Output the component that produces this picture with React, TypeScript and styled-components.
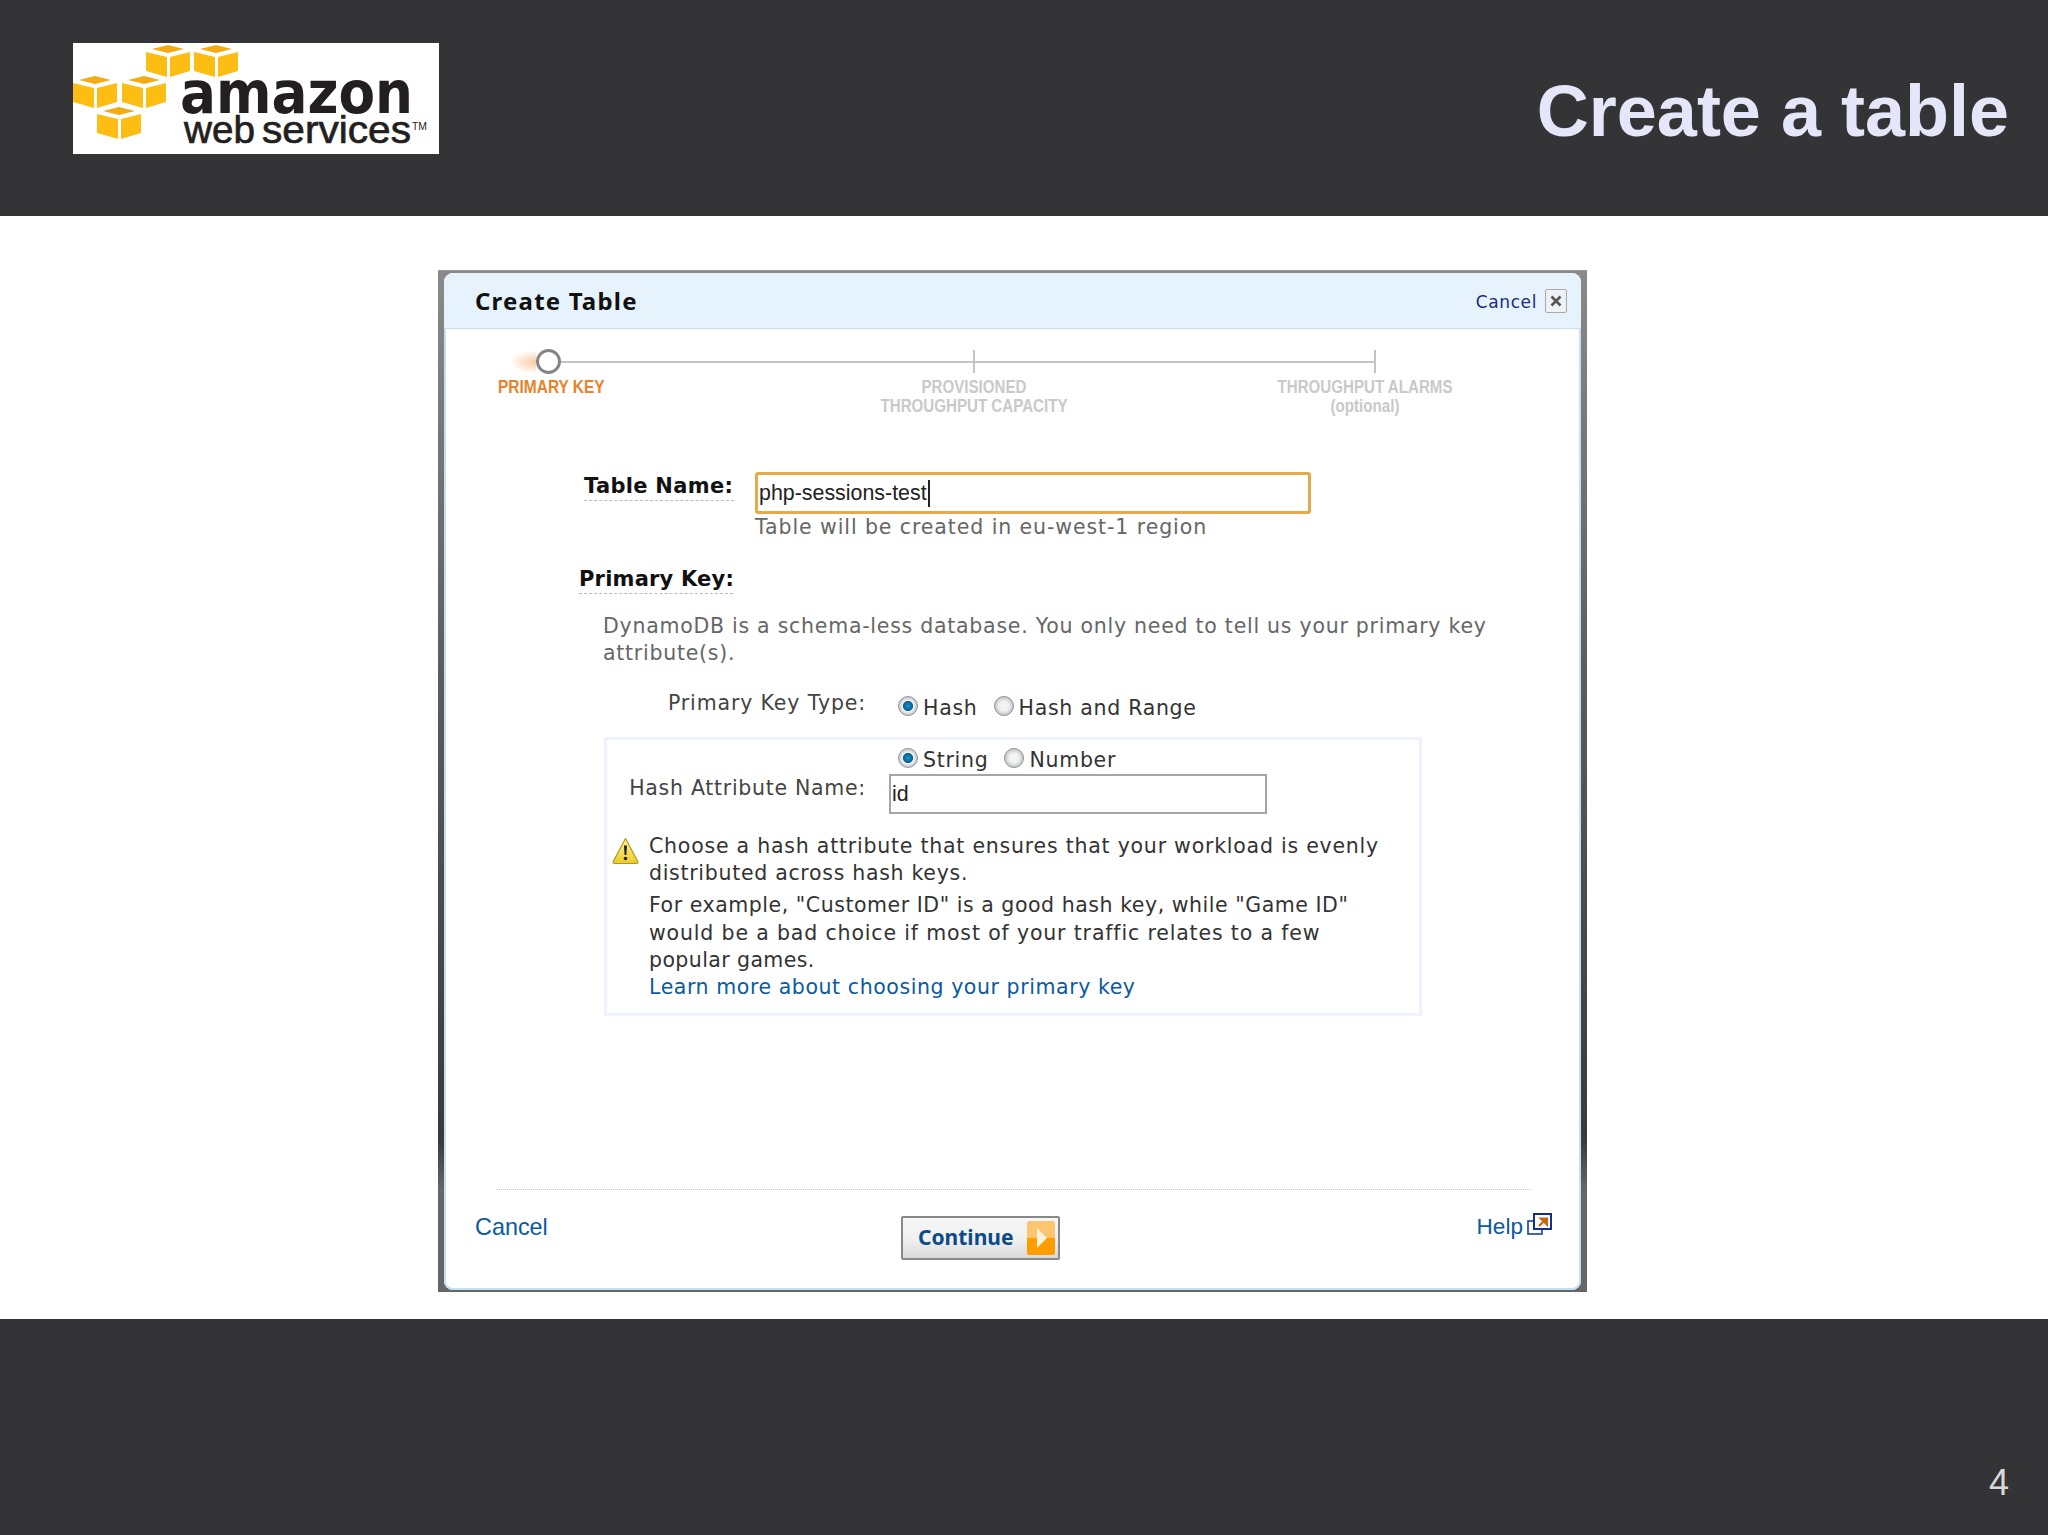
import React from 'react';
import styled, { createGlobalStyle } from 'styled-components';

const GlobalStyle = createGlobalStyle`
  html, body { margin: 0; padding: 0; background: #fff; }
  body { font-family: "DejaVu Sans", sans-serif; }
`;

const Slide = styled.div`
  width: 2048px;
  height: 1535px;
  display: flex;
  flex-direction: column;
  overflow: hidden;
`;

const TopBar = styled.header`
  height: 216px;
  background: #343336;
  display: flex;
  justify-content: space-between;
  padding: 43px 39px 0 73px;
  box-sizing: border-box;
`;

const SlideTitle = styled.h1`
  margin: 23px 0 0;
  font: bold 72px/90px "Liberation Sans", Arial, sans-serif;
  color: #e6e6fa;
`;

const Main = styled.main`
  flex: 1;
  padding: 54px 0 0 438px;
`;

const BottomBar = styled.footer`
  height: 216px;
  background: #343336;
  display: flex;
  justify-content: flex-end;
  padding: 139px 39px 0 0;
  box-sizing: border-box;
`;

const PageNumber = styled.span`
  font: 36px/50px "Liberation Sans", Arial, sans-serif;
  color: #d8d8d8;
`;

const Frame = styled.div`
  width: 1149px;
  height: 1022px;
  box-sizing: border-box;
  padding: 2px 6px;
  background: linear-gradient(#8a8a8a 0, #5c5c5c 40%, #3a3a3a 85%, #666 90%);
  border-top: 1px solid #999;
`;

const Panel = styled.section`
  height: 100%;
  background: #fff;
  border-radius: 9px;
  box-shadow: inset 2px 0 0 #c4e0f3, inset -2px 0 0 #c4e0f3, inset 0 -2px 0 #c4e0f3;
  overflow: hidden;
  display: flex;
  flex-direction: column;
`;

const PanelHeader = styled.div`
  height: 56px;
  flex: none;
  box-sizing: border-box;
  background: #e6f2fc;
  border-bottom: 1px solid #c5e0f5;
  padding: 0 14px 0 31px;
  display: flex;
  align-items: center;
  justify-content: space-between;
`;

const PanelTitle = styled.h2`
  margin: 0;
  font: bold 24px/30px "Noto Sans", sans-serif;
  letter-spacing: 1.2px;
  color: #111;
`;

const HeaderActions = styled.div`
  display: flex;
  align-items: center;
  gap: 8px;
`;

const HeaderCancel = styled.a`
  font-size: 17px;
  line-height: 24px;
  padding-top: 2px;
  letter-spacing: 0.6px;
  color: #1a2a80;
`;

const CloseBox = styled.span`
  width: 22px;
  height: 24px;
  box-sizing: border-box;
  border: 1px solid #aaa;
  border-radius: 2px;
  background: #eef1f5;
  display: flex;
  align-items: center;
  justify-content: center;
`;

const Track = styled.div`
  margin-top: 20px;
  padding-left: 67px;
  height: 25px;
  display: flex;
  align-items: center;
`;

const TrackTail = styled.span`
  width: 25px;
  height: 22px;
  background: radial-gradient(ellipse at 100% 50%, rgba(240, 150, 70, 0.5), rgba(240, 150, 70, 0) 75%);
`;

const TrackCircle = styled.span`
  width: 25px;
  height: 25px;
  box-sizing: border-box;
  border: 3px solid #858585;
  border-radius: 50%;
  background: #fff;
`;

const TrackLine = styled.div`
  position: relative;
  width: 815px;
  height: 2px;
  background: #c4c4c4;
`;

const TrackTick = styled.span<{ $left: number }>`
  position: absolute;
  left: ${p => p.$left}px;
  top: -11px;
  width: 2px;
  height: 23px;
  background: #c4c4c4;
`;

const StepLabels = styled.div`
  margin-top: 4px;
  padding-left: 54px;
  display: grid;
  grid-template-columns: 356px 240px 151px 240px;
`;

const StepLabel = styled.div<{ $active?: boolean }>`
  font: bold 18px/19px "Liberation Sans", sans-serif;
  color: ${p => (p.$active ? '#e8832a' : '#c9c9c9')};
  text-align: ${p => (p.$active ? 'left' : 'center')};
  white-space: nowrap;
  transform: scaleX(${p => (p.$active ? 0.86 : 0.84)});
  transform-origin: ${p => (p.$active ? 'left' : 'center')};
`;

const NameRow = styled.div`
  margin-top: 56px;
  padding-left: 140px;
  display: flex;
  align-items: flex-start;
`;

const FieldLabel = styled.label`
  display: block;
  font-weight: bold;
  font-size: 21px;
  line-height: 28px;
  letter-spacing: 0.3px;
  color: #111;
  border-bottom: 1px dashed #bbb;
  white-space: nowrap;
`;

const TableNameLabel = styled(FieldLabel)`
  width: 150px;
  margin-right: 21px;
`;

const PrimaryKeyLabel = styled(FieldLabel)`
  width: 154px;
  margin: 25px 0 0 135px;
  letter-spacing: 0.2px;
`;

const FocusedInput = styled.div`
  width: 556px;
  height: 42px;
  box-sizing: border-box;
  border: 3px solid #e4aa4c;
  border-radius: 3px;
  padding-left: 1px;
  display: flex;
  align-items: center;
  font: 21.4px/30px "Liberation Sans", sans-serif;
  color: #222;
`;

const Caret = styled.span`
  width: 2px;
  height: 27px;
  margin-left: 1px;
  background: #222;
`;

const Hint = styled.div`
  margin-left: 311px;
  font-size: 20.5px;
  line-height: 26px;
  letter-spacing: 0.91px;
  color: #666;
  white-space: nowrap;
`;

const Intro = styled.p`
  margin: 19px 0 0 159px;
  font-size: 20.5px;
  line-height: 27px;
  letter-spacing: 0.74px;
  color: #666;
  white-space: nowrap;
`;

const TypeRow = styled.div`
  margin: 23px 0 0 222px;
  height: 32px;
  display: flex;
`;

const RowLabel = styled.span<{ $width: number }>`
  width: ${p => p.$width}px;
  flex: none;
  text-align: right;
  font-size: 20.5px;
  line-height: 27px;
  letter-spacing: 0.86px;
  color: #444;
  white-space: nowrap;
`;

const AttributeLabel = styled(RowLabel)`
  margin-top: 1px;
  letter-spacing: 0.71px;
`;

const RadioGroup = styled.div<{ $left: number; $top: number; $gap: number }>`
  margin: ${p => p.$top}px 0 0 ${p => p.$left}px;
  display: flex;
  gap: ${p => p.$gap}px;
`;

const RadioOption = styled.span`
  display: flex;
  align-items: flex-start;
  gap: 5px;
  font-size: 20.5px;
  line-height: 27px;
  letter-spacing: 0.71px;
  color: #333;
  white-space: nowrap;
`;

const Radio = styled.span<{ $checked?: boolean }>`
  width: 20px;
  height: 20px;
  margin-top: 1px;
  box-sizing: border-box;
  border-radius: 50%;
  border: 1px solid #8f959b;
  background: ${p =>
    p.$checked
      ? 'radial-gradient(circle closest-side, #1496cc 0, #0a5e8c 52%, #f2f4f6 60%, #c4c8cc 100%)'
      : 'radial-gradient(circle closest-side, #f6f6f6 0, #f0f0f0 55%, #c4c6c8 100%)'};
`;

const AttributeBox = styled.div`
  margin: 15px 0 0 160px;
  width: 818px;
  height: 279px;
  box-sizing: border-box;
  border: 3px solid #eef3fd;
`;

const AttributeRow = styled.div`
  display: flex;
`;

const PlainInput = styled.div`
  width: 378px;
  height: 40px;
  margin-left: 23px;
  box-sizing: border-box;
  border: 2px solid #a5a5a5;
  padding-left: 1px;
  display: flex;
  align-items: center;
  font: 21.4px/30px "Liberation Sans", sans-serif;
  color: #222;
`;

const WarningRow = styled.div`
  margin-top: 18px;
  padding-left: 5px;
  display: flex;
  gap: 10px;
`;

const WarningIcon = styled.svg`
  width: 27px;
  height: 28px;
  margin-top: 5px;
  flex: none;
`;

const WarningText = styled.div`
  margin-top: 1px;
  font-size: 20.5px;
  line-height: 27.2px;
  color: #333;
  white-space: nowrap;
`;

const WarningPara = styled.p`
  margin: 0 0 5px;
`;

/* the source text is hinted, so each line ran a little wider or narrower */
const WarningLine = styled.span<{ $spacing: number }>`
  display: block;
  letter-spacing: ${p => p.$spacing}px;
`;

const LearnMore = styled.a`
  display: block;
  letter-spacing: 0.57px;
  color: #0b5a9f;
`;

const DottedRule = styled.div`
  margin: 173px 0 0 53px;
  width: 1033px;
  height: 1px;
  background: repeating-linear-gradient(90deg, #c4c4c4 0 1px, #fff 1px 2px);
`;

const ActionRow = styled.div`
  margin-top: 23px;
  padding: 0 29px 0 31px;
  display: flex;
  align-items: flex-start;
`;

const FooterLink = styled.a`
  font: 22.6px/28px "Liberation Sans", sans-serif;
  color: #0b5a9f;
`;

const CancelLink = styled(FooterLink)`
  width: 426px;
  flex: none;
  font-size: 23.4px;
`;

const ContinueButton = styled.button`
  width: 159px;
  height: 44px;
  margin-top: 3px;
  padding: 0 3px 2px 15px;
  box-sizing: border-box;
  border: 2px solid #888;
  border-radius: 2px;
  background: linear-gradient(#f7f7f7, #f0f0f0 55%, #d9d9dc);
  display: flex;
  align-items: center;
  justify-content: space-between;
  font: bold 21px/26px "Noto Sans", sans-serif;
  color: #0b4a8a;
`;

const ArrowTile = styled.span`
  width: 28px;
  height: 34px;
  margin-top: 2px;
  border-radius: 2px;
  background: linear-gradient(#fcc56e 50%, #ff9c00 50%);
  display: flex;
  align-items: center;
  justify-content: center;
  &::after {
    content: '';
    margin-left: 2px;
    border-left: 10px solid #fff2dc;
    border-top: 10px solid transparent;
    border-bottom: 10px solid transparent;
  }
`;

const HelpGroup = styled.div`
  margin-left: auto;
  display: flex;
  align-items: flex-start;
  gap: 4px;
`;

const Cube = ({ x, y }: { x: number; y: number }) => (
  <g transform={`translate(${x} ${y})`}>
    <path d="M6 5 22 1 38 5 22 9Z" fill="#f2ab12" />
    <path d="M0 8 21 13V33L0 27Z" fill="#fdbd13" />
    <path d="M24 13 44 8V27L24 33Z" fill="#fdbd13" />
  </g>
);

const AwsLogo = () => (
  <svg width="366" height="111" viewBox="0 0 366 111">
    <rect width="366" height="111" fill="#fff" />
    <Cube x={73} y={1} />
    <Cube x={121} y={1} />
    <Cube x={0} y={32} />
    <Cube x={49} y={32} />
    <Cube x={24} y={63} />
    <text x="107" y="70" textLength="233" lengthAdjust="spacingAndGlyphs" fontFamily="DejaVu Sans" fontWeight="bold" fontSize="58" fill="#231f20">amazon</text>
    <text x="111" y="100" textLength="71" lengthAdjust="spacingAndGlyphs" fontFamily="Liberation Sans" fontSize="39" stroke="#231f20" strokeWidth="0.7" fill="#231f20">web</text>
    <text x="189" y="100" textLength="149" lengthAdjust="spacingAndGlyphs" fontFamily="Liberation Sans" fontSize="39" stroke="#231f20" strokeWidth="0.7" fill="#231f20">services</text>
    <text x="339" y="87" textLength="15" lengthAdjust="spacingAndGlyphs" fontFamily="Liberation Sans" fontSize="10" fill="#231f20">TM</text>
  </svg>
);

export default function App() {
  return (
    <>
      <GlobalStyle />
      <Slide>
        <TopBar>
          <AwsLogo />
          <SlideTitle>Create a table</SlideTitle>
        </TopBar>
        <Main>
          <Frame>
            <Panel>
              <PanelHeader>
                <PanelTitle>Create Table</PanelTitle>
                <HeaderActions>
                  <HeaderCancel>Cancel</HeaderCancel>
                  <CloseBox>
                    <svg width="12" height="12" viewBox="0 0 12 12">
                      <path d="M1.5 1.5 10.5 10.5M10.5 1.5 1.5 10.5" stroke="#555" strokeWidth="2.6" />
                    </svg>
                  </CloseBox>
                </HeaderActions>
              </PanelHeader>

              <Track>
                <TrackTail />
                <TrackCircle />
                <TrackLine>
                  <TrackTick $left={412} />
                  <TrackTick $left={813} />
                </TrackLine>
              </Track>
              <StepLabels>
                <StepLabel $active>PRIMARY KEY</StepLabel>
                <StepLabel>PROVISIONED<br />THROUGHPUT CAPACITY</StepLabel>
                <span />
                <StepLabel>THROUGHPUT ALARMS<br />(optional)</StepLabel>
              </StepLabels>

              <NameRow>
                <TableNameLabel>Table Name:</TableNameLabel>
                <FocusedInput>php-sessions-test<Caret /></FocusedInput>
              </NameRow>
              <Hint>Table will be created in eu-west-1 region</Hint>

              <PrimaryKeyLabel>Primary Key:</PrimaryKeyLabel>
              <Intro>
                DynamoDB is a schema-less database. You only need to tell us your primary key<br />
                attribute(s).
              </Intro>

              <TypeRow>
                <RowLabel $width={200}>Primary Key Type:</RowLabel>
                <RadioGroup $left={32} $top={5} $gap={16}>
                  <RadioOption><Radio $checked />Hash</RadioOption>
                  <RadioOption><Radio />Hash and Range</RadioOption>
                </RadioGroup>
              </TypeRow>

              <AttributeBox>
                <RadioGroup $left={291} $top={7} $gap={16}>
                  <RadioOption><Radio $checked />String</RadioOption>
                  <RadioOption><Radio />Number</RadioOption>
                </RadioGroup>
                <AttributeRow>
                  <AttributeLabel $width={259}>Hash Attribute Name:</AttributeLabel>
                  <PlainInput>id</PlainInput>
                </AttributeRow>
                <WarningRow>
                  <WarningIcon viewBox="0 0 27 28">
                    <defs>
                      <linearGradient id="warn" x1="0" y1="0" x2="0" y2="1">
                        <stop offset="0" stopColor="#fff6a8" />
                        <stop offset="1" stopColor="#eccb24" />
                      </linearGradient>
                    </defs>
                    <path d="M13.5 1.5 25.8 24.5Q26.3 26.5 24.5 26.5H2.5Q.7 26.5 1.2 24.5Z" fill="url(#warn)" stroke="#b5961c" strokeWidth="1.2" strokeLinejoin="round" />
                    <path d="M12 8.5h3l-.6 9.5h-1.8Z" fill="#222" />
                    <circle cx="13.5" cy="21.5" r="1.8" fill="#222" />
                  </WarningIcon>
                  <WarningText>
                    <WarningPara>
                      <WarningLine $spacing={0.77}>Choose a hash attribute that ensures that your workload is evenly</WarningLine>
                      <WarningLine $spacing={0.7}>distributed across hash keys.</WarningLine>
                    </WarningPara>
                    <WarningLine $spacing={0.54}>For example, "Customer ID" is a good hash key, while "Game ID"</WarningLine>
                    <WarningLine $spacing={0.84}>would be a bad choice if most of your traffic relates to a few</WarningLine>
                    <WarningLine $spacing={0.4}>popular games.</WarningLine>
                    <LearnMore>Learn more about choosing your primary key</LearnMore>
                  </WarningText>
                </WarningRow>
              </AttributeBox>

              <DottedRule />
              <ActionRow>
                <CancelLink>Cancel</CancelLink>
                <ContinueButton>Continue<ArrowTile /></ContinueButton>
                <HelpGroup>
                  <FooterLink>Help</FooterLink>
                  <svg width="25" height="22" viewBox="0 0 25 22">
                    <rect x="1" y="8" width="14" height="13" fill="#fff" stroke="#1c3f9e" strokeWidth="1.6" />
                    <rect x="7" y="1" width="17" height="15" fill="#fff" stroke="#12308f" strokeWidth="2" />
                    <path d="M12 13 17.5 7.5M14 5.5H20V11.5Z" stroke="#c4690f" strokeWidth="2.2" fill="#c4690f" />
                  </svg>
                </HelpGroup>
              </ActionRow>
            </Panel>
          </Frame>
        </Main>
        <BottomBar>
          <PageNumber>4</PageNumber>
        </BottomBar>
      </Slide>
    </>
  );
}
